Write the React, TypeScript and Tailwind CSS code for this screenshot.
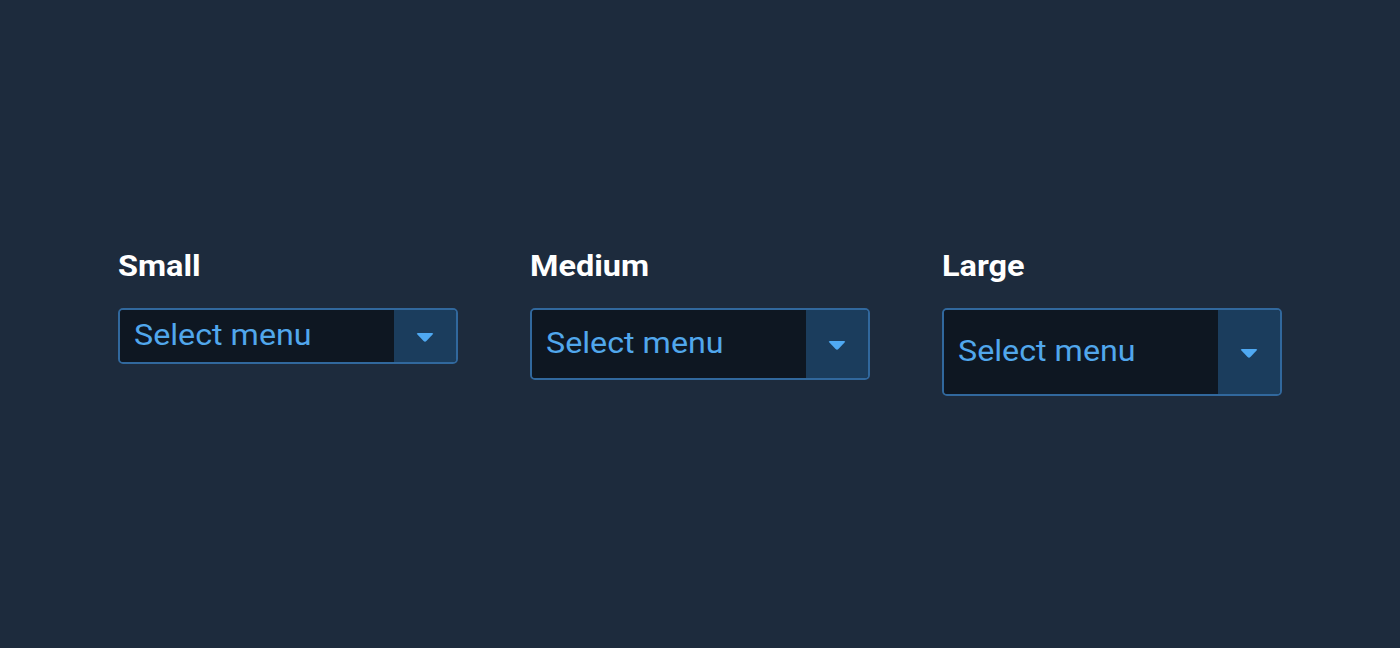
const SIZES = [
  { label: "Small", height: "h-[56px]" },
  { label: "Medium", height: "h-[72px]" },
  { label: "Large", height: "h-[88px]" },
];

function Caret() {
  return (
    <svg width="20" height="12" viewBox="0 0 20 12" aria-hidden="true">
      <path
        d="M3 2 H17 Q19 2 17.6 3.6 L11.4 10 Q10 11.4 8.6 10 L2.4 3.6 Q1 2 3 2 Z"
        fill="#4fa9f2"
      />
    </svg>
  );
}

function SelectMenu({ height }: { height: string }) {
  return (
    <div
      className={`flex w-[340px] ${height} overflow-hidden rounded-[5px] border-2 border-[#31689d]`}
    >
      <div className="flex flex-1 items-center bg-[#0e1722] pb-[3px] pl-[14px]">
        <span className="inline-block origin-left scale-x-[1.075] text-[30px] leading-[36px] text-[#51a7ec]">
          Select menu
        </span>
      </div>
      <div className="flex w-[62px] items-center justify-center bg-[#1b3d5d] pt-[2px]">
        <Caret />
      </div>
    </div>
  );
}

export default function App() {
  return (
    <div
      className="flex h-[648px] w-full items-center justify-center bg-[#1d2b3d]"
      style={{ fontFamily: "Roboto, 'Liberation Sans', sans-serif" }}
    >
      <div className="flex items-start gap-[72px] pb-[4px]">
        {SIZES.map((s) => (
          <div key={s.label} className="flex flex-col items-start gap-[24px]">
            <span className="inline-block origin-left scale-x-[1.1] text-[29.5px] leading-[36px] font-bold text-white">
              {s.label}
            </span>
            <SelectMenu height={s.height} />
          </div>
        ))}
      </div>
    </div>
  );
}
